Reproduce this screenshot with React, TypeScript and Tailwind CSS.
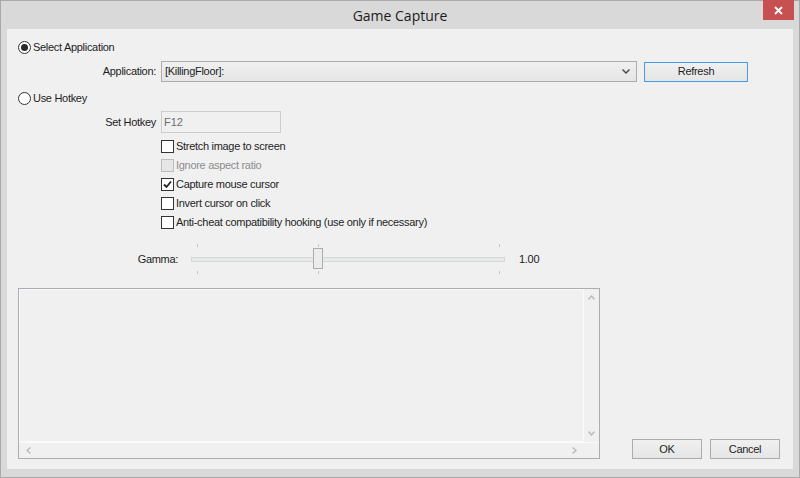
import type { ReactNode } from 'react'

const ui = { fontFamily: '"Liberation Sans", Arial, sans-serif' }

function Radio({ checked, children }: { checked?: boolean; children: ReactNode }) {
  return (
    <div className="flex h-4 items-center gap-[2px] text-[11px] tracking-[-0.3px] text-[#1e1e1e]">
      <span className="flex h-[13px] w-[13px] items-center justify-center rounded-full border border-[#333333] bg-white">
        {checked && <span className="h-[7px] w-[7px] rounded-full bg-[#2b2b2b]" />}
      </span>
      <span>{children}</span>
    </div>
  )
}

function Check({ checked, disabled, children }: { checked?: boolean; disabled?: boolean; children: ReactNode }) {
  return (
    <div className="flex h-[19px] items-center gap-[2px] text-[11px] tracking-[-0.3px]">
      <span
        className={
          disabled
            ? 'flex h-[13px] w-[13px] items-center justify-center border border-[#bcbcbc] bg-[#e6e6e6]'
            : 'flex h-[13px] w-[13px] items-center justify-center border border-[#333333] bg-white'
        }
      >
        {checked && (
          <svg width="9" height="9" viewBox="0 0 9 9">
            <path d="M1 4.5 L3.5 7 L8 1.5" fill="none" stroke="#222" strokeWidth="1.8" />
          </svg>
        )}
      </span>
      <span className={disabled ? 'text-[#8d8d8d]' : 'text-[#1e1e1e]'}>{children}</span>
    </div>
  )
}

function Button({ children, focused, className }: { children: ReactNode; focused?: boolean; className?: string }) {
  return (
    <div
      className={
        (focused ? 'border-[#4c9be8] ' : 'border-[#acacac] ') +
        'flex items-center justify-center border bg-gradient-to-b from-[#f0f0f0] to-[#e5e5e5] text-[11px] tracking-[-0.3px] text-[#1e1e1e] ' +
        (className ?? '')
      }
    >
      {children}
    </div>
  )
}

function GammaSlider() {
  const ticks = [6, 127, 308]
  return (
    <div className="relative h-[34px] w-[314px]">
      {ticks.map((t) => (
        <div key={'t' + t}>
          <span className="absolute top-[2px] h-[3px] w-px bg-[#c4c4c4]" style={{ left: t }} />
          <span className="absolute top-[29px] h-[3px] w-px bg-[#c4c4c4]" style={{ left: t }} />
        </div>
      ))}
      <div className="absolute left-0 right-0 top-[15px] h-[5px] border border-[#d6d6d6] bg-[#e7eaea]" />
      <div className="absolute left-[122px] top-[6px] h-[21px] w-[10px] border border-[#acacac] bg-[#ececec]" />
    </div>
  )
}

function TextBox() {
  return (
    <div className="flex h-[171px] w-[582px] flex-col border border-[#abadb3] bg-[#f0f0f0]">
      <div className="flex min-h-0 flex-1">
        <div className="flex-1 border border-[#fafafa]" />
        <div className="flex w-[15px] flex-col items-center justify-between py-[6px]">
          <svg width="7" height="5" viewBox="0 0 7 5">
            <path d="M0.5 4.5 L3.5 1 L6.5 4.5" fill="none" stroke="#b8b8b8" strokeWidth="1.4" />
          </svg>
          <svg width="7" height="5" viewBox="0 0 7 5">
            <path d="M0.5 0.5 L3.5 4 L6.5 0.5" fill="none" stroke="#b8b8b8" strokeWidth="1.4" />
          </svg>
        </div>
      </div>
      <div className="flex h-[16px] items-center justify-between border-t border-[#fafafa] pl-[7px] pr-[22px]">
        <svg width="5" height="7" viewBox="0 0 5 7">
          <path d="M4.5 0.5 L1 3.5 L4.5 6.5" fill="none" stroke="#b8b8b8" strokeWidth="1.4" />
        </svg>
        <svg width="5" height="7" viewBox="0 0 5 7">
          <path d="M0.5 0.5 L4 3.5 L0.5 6.5" fill="none" stroke="#b8b8b8" strokeWidth="1.4" />
        </svg>
      </div>
    </div>
  )
}

export default function App() {
  return (
    <div className="flex h-[478px] w-[800px] flex-col border border-[#a9a9a9] bg-[#d9d9d9]" style={ui}>
      {/* title bar */}
      <div className="relative flex h-[28px] shrink-0 items-center justify-center">
        <span className="text-[14px] text-[#1b1b1b]" style={{ fontFamily: '"Open Sans", sans-serif' }}>
          Game Capture
        </span>
        <div className="absolute right-[5px] top-[-1px] flex h-[20px] w-[31px] items-center justify-center bg-[#c75050]">
          <svg width="9" height="9" viewBox="0 0 9 9">
            <path d="M1 1 L8 8 M8 1 L1 8" stroke="white" strokeWidth="1.8" />
          </svg>
        </div>
      </div>

      {/* client area */}
      <div className="mx-[6px] mb-[8px] flex flex-1 flex-col bg-[#f0f0f0] pl-[11px] pr-[13px] pb-[10px]">
        <div className="mt-[10px]">
          <Radio checked>Select Application</Radio>
        </div>

        <div className="mt-[6px] flex h-[21px] items-center">
          <span className="w-[143px] pr-[5px] text-right text-[11px] tracking-[-0.3px] text-[#1e1e1e]">Application:</span>
          <div className="flex h-[21px] w-[476px] items-center justify-between border border-[#acacac] bg-gradient-to-b from-[#f0f0f0] to-[#e5e5e5] pl-[3px] pr-[6px] text-[11px] tracking-[-0.3px] text-[#1e1e1e]">
            <span>[KillingFloor]:</span>
            <svg width="8" height="5" viewBox="0 0 8 5">
              <path d="M0.5 0.5 L4 4 L7.5 0.5" fill="none" stroke="#444" strokeWidth="1.4" />
            </svg>
          </div>
          <Button focused className="ml-[7px] h-[20px] w-[104px]">
            Refresh
          </Button>
        </div>

        <div className="mt-[8px]">
          <Radio>Use Hotkey</Radio>
        </div>

        <div className="mt-[5px] flex h-[22px] items-center">
          <span className="w-[143px] pr-[5px] text-right text-[11px] tracking-[-0.3px] text-[#1e1e1e]">Set Hotkey</span>
          <div className="flex h-[22px] w-[120px] items-center border border-[#cccccc] bg-[#f0f0f0] pl-[2px] text-[11px] text-[#6d6d6d]">
            F12
          </div>
        </div>

        <div className="mt-[4px] flex flex-col pl-[143px]">
          <Check>Stretch image to screen</Check>
          <Check disabled>Ignore aspect ratio</Check>
          <Check checked>Capture mouse cursor</Check>
          <Check>Invert cursor on click</Check>
          <Check>Anti-cheat compatibility hooking (use only if necessary)</Check>
        </div>

        <div className="mt-[10px] flex items-center">
          <span className="w-[160px] text-right text-[11px] tracking-[-0.3px] text-[#1e1e1e]">Gamma:</span>
          <div className="ml-[13px]">
            <GammaSlider />
          </div>
          <span className="ml-[14px] text-[11px] tracking-[-0.3px] text-[#1e1e1e]">1.00</span>
        </div>

        <div className="mt-auto flex items-end justify-between">
          <TextBox />
          <div className="flex gap-[8px]">
            <Button className="h-[20px] w-[70px]">OK</Button>
            <Button className="h-[20px] w-[70px]">Cancel</Button>
          </div>
        </div>
      </div>
    </div>
  )
}
